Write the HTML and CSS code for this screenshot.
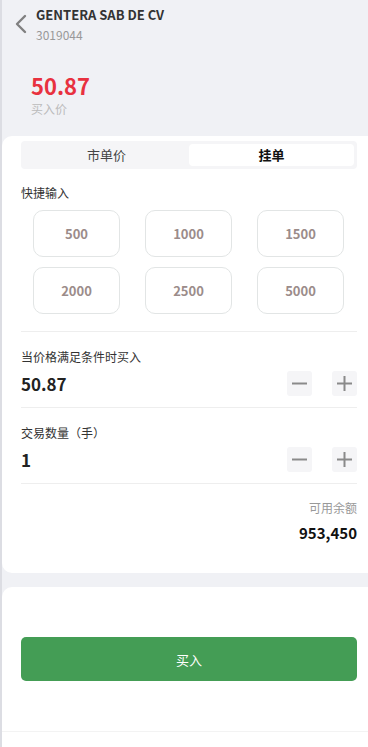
FILE: index.html
```html
<!DOCTYPE html>
<html lang="zh">
<head>
<meta charset="utf-8">
<link rel="stylesheet" href="styles.css">
</head>
<body>
<div class="page">
  <header class="top">
    <div class="back">
      <svg width="14" height="20" viewBox="0 0 14 20"><path d="M11 2 L3 10 L11 18" fill="none" stroke="#808080" stroke-width="2.4" stroke-linecap="round" stroke-linejoin="round"/></svg>
    </div>
    <div class="titles">
      <div class="name">GENTERA SAB DE CV</div>
      <div class="code">3019044</div>
    </div>
  </header>
  <section class="price">
    <div class="price-val">50.87</div>
    <div class="price-lbl">买入价</div>
  </section>
  <section class="card">
    <div class="seg">
      <div class="seg-item">市单价</div>
      <div class="seg-item active">挂单</div>
    </div>
    <div class="label quick">快捷输入</div>
    <div class="grid">
      <div class="chip">500</div>
      <div class="chip">1000</div>
      <div class="chip">1500</div>
      <div class="chip">2000</div>
      <div class="chip">2500</div>
      <div class="chip">5000</div>
    </div>
    <div class="row">
      <div class="label">当价格满足条件时买入</div>
      <div class="row-main">
        <div class="val">50.87</div>
        <div class="steps">
          <div class="step"><svg width="17" height="17" viewBox="0 0 17 17"><path d="M1 8.5 H16" stroke="#8a8a8a" stroke-width="2"/></svg></div>
          <div class="step"><svg width="17" height="17" viewBox="0 0 17 17"><path d="M1 8.5 H16 M8.5 1 V16" stroke="#8a8a8a" stroke-width="2"/></svg></div>
        </div>
      </div>
    </div>
    <div class="row">
      <div class="label">交易数量（手）</div>
      <div class="row-main">
        <div class="val">1</div>
        <div class="steps">
          <div class="step"><svg width="17" height="17" viewBox="0 0 17 17"><path d="M1 8.5 H16" stroke="#8a8a8a" stroke-width="2"/></svg></div>
          <div class="step"><svg width="17" height="17" viewBox="0 0 17 17"><path d="M1 8.5 H16 M8.5 1 V16" stroke="#8a8a8a" stroke-width="2"/></svg></div>
        </div>
      </div>
    </div>
    <div class="balance">
      <div class="bal-lbl">可用余额</div>
      <div class="bal-val">953,450</div>
    </div>
  </section>
  <section class="card bottom">
    <div class="buy">买入</div>
    <div class="foot-line"></div>
  </section>
</div>
</body>
</html>
```
FILE: styles.css
```css
* { box-sizing: border-box; margin: 0; padding: 0; }
html, body { height: 100%; }
body {
  background: #f0f1f5;
  font-family: "Noto Sans CJK SC", "Noto Sans", sans-serif;
  color: #333;
  overflow: hidden;
}
.page {
  height: 747px;
  overflow: hidden;
  border-left: 2px solid #dcdde3;
}
.top {
  display: flex;
  align-items: flex-start;
  padding: 6px 0 0 10px;
  height: 62px;
}
.back {
  width: 24px;
  padding-top: 8px;
  padding-left: 2px;
}
.titles { display: flex; flex-direction: column; }
.name {
  font-size: 13px;
  font-weight: 700;
  color: #333;
  line-height: 18px;
}
.code {
  font-size: 12px;
  color: #999;
  line-height: 18px;
  margin-top: 2px;
}
.price {
  padding-left: 29px;
  padding-top: 8px;
  height: 74px;
}
.price-val {
  font-size: 22px;
  font-weight: 700;
  color: #e8313f;
  line-height: 30px;
}
.price-lbl {
  font-size: 12px;
  color: #bbb;
  line-height: 18px;
}
.card {
  background: #fff;
  border-radius: 10px 0 0 10px;
  padding: 5px 11px 30px 19px;
}
.seg {
  display: flex;
  background: #f5f5f7;
  border-radius: 4px;
  padding: 3px;
  height: 28px;
}
.seg-item {
  flex: 1;
  text-align: center;
  font-size: 13px;
  line-height: 22px;
  color: #444;
  border-radius: 4px;
}
.seg-item.active {
  background: #fff;
  color: #111;
  font-weight: 700;
}
.label {
  font-size: 12px;
  color: #333;
  line-height: 18px;
}
.quick { margin-top: 15px; }
.grid {
  display: grid;
  grid-template-columns: repeat(3, 87px);
  column-gap: 25px;
  row-gap: 10px;
  padding: 8px 0 17px 12px;
  border-bottom: 1px solid #eeeeee;
}
.chip {
  height: 47px;
  border: 1px solid #e2e5e5;
  border-radius: 10px;
  display: flex;
  align-items: center;
  justify-content: center;
  font-size: 13px;
  font-weight: 700;
  color: #9b8c8a;
}
.row {
  padding-top: 16px;
  padding-bottom: 11px;
  border-bottom: 1px solid #eeeeee;
}
.row-main {
  display: flex;
  justify-content: space-between;
  align-items: center;
  margin-top: 5px;
}
.val {
  font-size: 17px;
  font-weight: 700;
  color: #222;
}
.steps { display: flex; gap: 20px; }
.step {
  width: 25px;
  height: 25px;
  background: #f5f5f7;
  border-radius: 3px;
  display: flex;
  align-items: center;
  justify-content: center;
}
.balance {
  text-align: right;
  padding-top: 15px;
}
.bal-lbl { font-size: 12px; color: #999; line-height: 18px; }
.bal-val { font-size: 15px; font-weight: 700; color: #111; line-height: 20px; margin-top: 6px; }
.bottom {
  margin-top: 14px;
  border-radius: 10px 0 0 0;
  padding: 50px 11px 0 19px;
  height: 170px;
}
.buy {
  height: 44px;
  background: #449d55;
  border-radius: 5px;
  color: #fff;
  font-size: 13px;
  display: flex;
  align-items: center;
  justify-content: center;
}
.foot-line {
  margin: 50px -11px 0 -19px;
  border-top: 1px solid #f3f3f3;
}
```
